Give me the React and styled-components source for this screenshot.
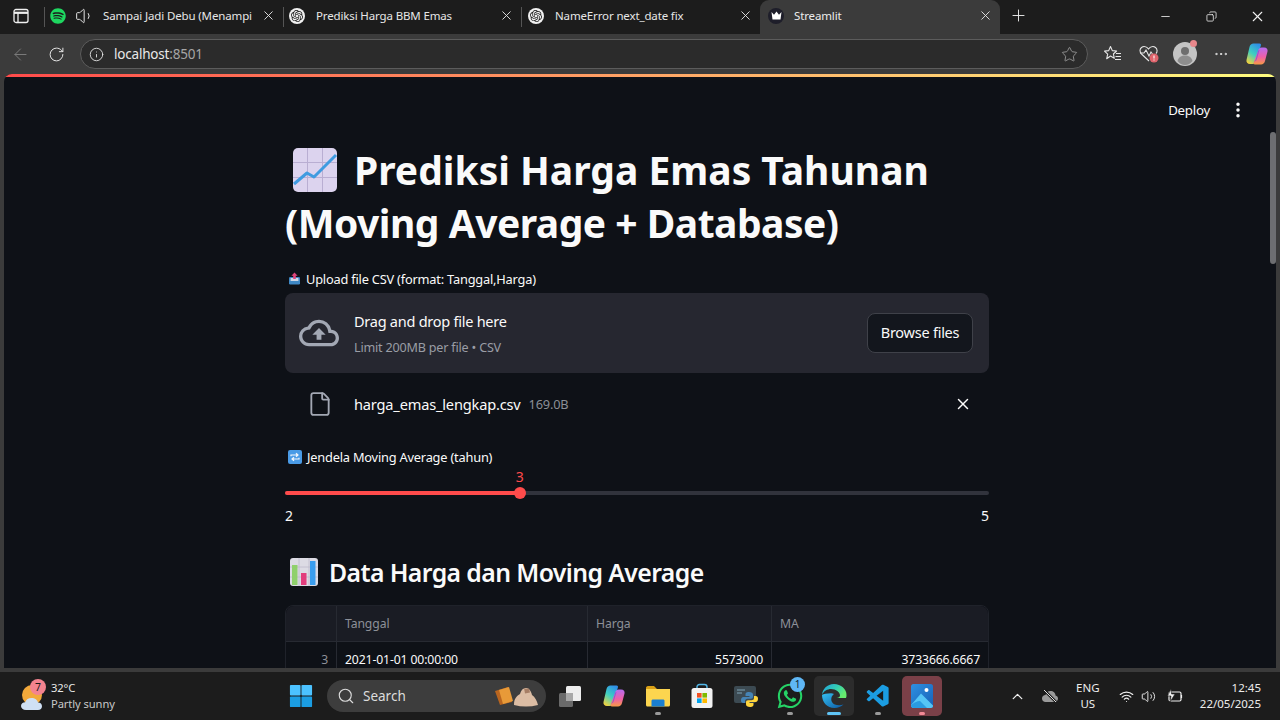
import React from 'react';
import styled, { createGlobalStyle } from 'styled-components';
import { X, Plus, Minus, ArrowLeft, RotateCw, Info, Star, MoreHorizontal, Search, ChevronUp, Wifi, Volume2, Volume1, File, EllipsisVertical, Copy } from 'lucide-react';
import { FaWhatsapp, FaSpotify } from 'react-icons/fa';
import { SiOpenai } from 'react-icons/si';
import { VscVscode } from 'react-icons/vsc';
import { MdOutlineCloudUpload } from 'react-icons/md';

const sans = `"Noto Sans", "Open Sans", sans-serif`;

const Global = createGlobalStyle`
  html, body { margin: 0; padding: 0; width: 1280px; height: 720px; overflow: hidden; background: #1c1c1c; }
  * { box-sizing: border-box; }
`;

const Screen = styled.div`
  width: 1280px; height: 720px; display: flex; flex-direction: column; overflow: hidden;
  font-family: ${sans}; color: #fafafa; background: #1c1c1c;
`;

/* ---------- browser chrome ---------- */
const TabBar = styled.div`
  height: 34px; flex: none; display: flex; align-items: flex-end; background: #1c1c1c; padding-left: 12px;
`;
const SideToggle = styled.div`
  width: 32px; height: 34px; flex: none; display: flex; align-items: center; justify-content: flex-start; padding: 0 0 2px 1px; color: #f0f0f0;
`;
const Tab = styled.div`
  position: relative; height: 34px; width: ${p => p.$w}px; flex: none; display: flex; align-items: center;
  padding: 0 7px 3px ${p => p.$pl || 10}px; font-size: 11.5px; letter-spacing: -0.14px; color: #e6e6e6;
  ${p => p.$sep && `
    &::before { content: ''; position: absolute; left: 0; top: 7px; height: 20px; width: 1px; background: #555; }
  `}
  ${p => p.$active && `background: #3b3b3b; border-radius: 9px 9px 0 0; color: #ececec;`}
`;
const TabTitle = styled.span`
  flex: 1; min-width: 0; white-space: nowrap; overflow: hidden; margin-left: ${p => p.$ml || 10}px;
`;
const TabClose = styled(X)`flex: none; color: #e2e2e2;`;
const NewTab = styled.div`
  height: 34px; width: 36px; flex: none; display: flex; align-items: center; justify-content: center; color: #e8e8e8; padding-bottom: 3px;
`;
const WindowButtons = styled.div`
  margin-left: auto; height: 34px; display: flex; align-items: center; padding-bottom: 1px; color: #f2f2f2;
`;
const WindowButton = styled.div`
  width: 46px; display: flex; align-items: center; justify-content: center;
`;
const Chrome = styled.div`
  height: 40px; flex: none; display: flex; align-items: flex-start; background: #3b3b3b; padding: 5px 10px 0 8px;
`;
const NavIcon = styled.div`
  width: 24px; height: 30px; flex: none; display: flex; align-items: center; justify-content: center;
  margin-left: ${p => p.$ml || 0}px; color: ${p => p.$dim ? '#7d7d7d' : '#e6e6e6'};
`;
const Address = styled.div`
  flex: none; width: 1008px; height: 30px; display: flex; align-items: center; padding: 0 9px 0 8px; margin-left: 12px;
  border: 1px solid #5c5c5c; border-radius: 15px; background: #2b2b2b; font-size: 13.5px; color: #e8e8e8;
`;
const Host = styled.span`margin-left: 10px; flex: 1; letter-spacing: -0.2px;`;
const Port = styled.span`color: #a5a5a5;`;
const ChromeTools = styled.div`
  display: flex; align-items: center; height: 30px; margin-left: 7px; color: #e6e6e6;
`;
const ChromeTool = styled.div`
  position: relative; width: 36px; height: 30px; display: flex; align-items: center; justify-content: center;
`;
const RedDot = styled.span`
  position: absolute; right: ${p => p.$r}px; top: ${p => p.$t}px; width: ${p => p.$s}px; height: ${p => p.$s}px;
  border-radius: 50%; background: ${p => p.$c};
`;

const Frame = styled.div`
  flex: 1; min-height: 0; display: flex; background: #3b3b3b; padding: 0 4px 4px;
`;
const Page = styled.main`
  position: relative; flex: 1; min-width: 0; background: #0e1117; border-radius: 8px 8px 0 0; overflow: hidden;
`;
const Decoration = styled.div`
  height: 2.5px; background: linear-gradient(90deg, #ff4b4b, #fffd80);
`;
const StToolbar = styled.div`
  height: 66px; display: flex; align-items: flex-start; justify-content: flex-end; padding: 23px 28px 0 0;
  font-size: 13.3px; color: #fafafa; letter-spacing: -0.25px;
`;
const Deploy = styled.span`line-height: 20px; margin-right: 18px;`;
const MenuDots = styled(EllipsisVertical)`color: #fafafa;`;
const ScrollThumb = styled.div`
  position: absolute; right: 0; top: 58px; width: 6px; height: 132px; border-radius: 3px; background: #6d6e71;
`;
const Column = styled.div`
  width: 704px; margin-left: 281px;
`;
const H1 = styled.h1`
  margin: 0; font-size: 39px; line-height: 53px; font-weight: 700; color: #fafafa; white-space: nowrap;
`;
const H1Line = styled.span`
  display: block; letter-spacing: ${p => p.$ls}px;
`;
const HeadEmoji = styled.svg`
  width: 46px; height: 46px; vertical-align: -8px; margin-left: 7px; margin-right: 16px;
`;
const WidgetLabel = styled.div`
  display: flex; align-items: center; gap: 5px; height: 20px; font-size: 12.8px; letter-spacing: -0.2px; color: #fafafa; padding-left: 3px;
  margin-top: ${p => p.$mt}px;
`;
const Drop = styled.div`
  margin-top: 4px; height: 80px; display: flex; align-items: center; padding: 0 16px; background: #262730; border-radius: 8px;
`;
const CloudIcon = styled(MdOutlineCloudUpload)`flex: none; color: #a3a8b4; margin-left: -2px;`;
const DropText = styled.div`margin-left: 15px; padding-top: 2px; flex: 1; display: flex; flex-direction: column; gap: 7px;`;
const DropTitle = styled.div`font-size: 14.5px; line-height: 22px; letter-spacing: -0.25px; color: #fafafa;`;
const DropHint = styled.div`font-size: 12.6px; line-height: 18px; letter-spacing: -0.2px; color: #9a9da5;`;
const BrowseBtn = styled.div`
  width: 106px; height: 40px; display: flex; align-items: center; justify-content: center; border-radius: 8px; padding-bottom: 2px;
  border: 1px solid #3f4149; background: #13161d; font-size: 14.5px; letter-spacing: -0.25px; color: #fafafa;
`;
const FileRow = styled.div`
  margin-top: 7px; height: 48px; display: flex; align-items: center; padding-left: 22px; padding-right: 16px;
`;
const FileIcon = styled(File)`flex: none; color: #a3a8b4;`;
const FileName = styled.span`margin-left: 21px; font-size: 14.6px; letter-spacing: -0.18px; color: #fafafa;`;
const FileSize = styled.span`margin-left: 8px; font-size: 12.8px; letter-spacing: -0.2px; color: #8b8e96;`;
const FileClose = styled(X)`margin-left: auto; color: #fafafa; margin-right: 1px;`;
const SliderWrap = styled.div`
  position: relative; margin-top: 24px; height: 4px; border-radius: 2px; background: #31333c;
`;
const SliderFill = styled.div`height: 4px; border-radius: 2px; background: #ff4b4b;`;
const Thumb = styled.div`
  position: absolute; top: -4px; width: 12px; height: 12px; margin-left: -6px; border-radius: 50%; background: #ff4b4b;
`;
const ThumbValue = styled.div`
  position: absolute; top: -23px; width: 20px; margin-left: -10px; text-align: center; font-size: 14px; line-height: 18px; color: #ff4b4b;
`;
const SliderEnds = styled.div`
  margin-top: 12px; display: flex; justify-content: space-between; font-size: 14px; line-height: 18px; color: #fafafa;
`;
const H2 = styled.h2`
  margin: 27px 0 0; display: flex; align-items: center; height: 40px; padding-left: 4px;
  font-size: 24.8px; font-weight: 600; letter-spacing: -0.6px; color: #fafafa; white-space: nowrap;
`;
const H2Emoji = styled.svg`width: 30px; height: 30px; flex: none; margin-right: 10px;`;
const DataTable = styled.div`
  margin-top: 13px; border: 1px solid #1f222a; border-radius: 8px 8px 0 0; display: grid;
  grid-template-columns: 51px 251px 184px 1fr; font-size: 12.2px;
`;
const HeadCell = styled.div`
  height: 36px; display: flex; align-items: center; padding: 0 8px; background: #1a1c24; color: #8d9098;
  border-right: 1px solid #272a32; border-bottom: 1px solid #272a32; letter-spacing: -0.1px;
  &:nth-child(4) { border-right: none; border-top-right-radius: 8px; }
  &:first-child { border-top-left-radius: 8px; }
`;
const BodyCell = styled.div`
  height: 35px; display: flex; align-items: center; padding: 0 8px; color: ${p => p.$muted ? '#8d9098' : '#fafafa'};
  justify-content: ${p => p.$right ? 'flex-end' : 'flex-start'}; letter-spacing: -0.12px;
  border-right: ${p => p.$last ? 'none' : '1px solid #272a32'};
`;

/* ---------- taskbar ---------- */
const Taskbar = styled.footer`
  height: 48px; flex: none; display: flex; align-items: center; background: #1c1c1c;
`;
const Weather = styled.div`
  width: 279px; flex: none; height: 48px; display: flex; align-items: center; padding-left: 20px;
`;
const WeatherIcon = styled.div`position: relative; width: 26px; height: 30px; flex: none;`;
const WeatherBadge = styled.span`
  position: absolute; top: -2px; left: 10px; width: 16px; height: 16px; border-radius: 50%; background: #f4838f; color: #1c1c1c;
  font-size: 10.5px; line-height: 16px; text-align: center;
`;
const WeatherText = styled.div`margin-left: 5px; font-size: 11.2px; line-height: 16px; color: #e8e8e8; letter-spacing: -0.1px;`;
const WeatherSub = styled.div`color: #c8c8c8;`;
const TaskIcon = styled.div`
  position: relative; isolation: isolate; width: 44px; height: 44px; flex: none; display: flex; align-items: center; justify-content: center;
  ${p => p.$bg && `
    &::before { content: ''; position: absolute; z-index: -1; inset: 2px; border-radius: 5px; background: ${p.$bg}; }
  `}
`;
const RunDot = styled.span`
  position: absolute; bottom: 3px; left: 50%; width: ${p => p.$w || 6}px; margin-left: -${p => (p.$w || 6) / 2}px; height: 3px; border-radius: 2px;
  background: ${p => p.$c || '#9a9a9a'};
`;
const CountBadge = styled.span`
  position: absolute; top: 3px; right: 7px; width: 15px; height: 15px; border-radius: 50%; background: #5fb7f5; color: #10222e;
  font-size: 10px; line-height: 15px; text-align: center;
`;
const SearchPill = styled.div`
  width: 219px; height: 32px; flex: none; margin: 0 2px 0 4px; display: flex; align-items: center; border-radius: 16px;
  background: #3d3d3d; padding: 0 2px 0 10px; font-size: 13.5px; color: #dcdcdc;
`;
const SearchWord = styled.span`margin-left: 8px; flex: 1;`;
const Tray = styled.div`
  margin-left: auto; display: flex; align-items: center; height: 48px; color: #f0f0f0;
`;
const TrayIcon = styled.div`
  width: ${p => p.$w || 32}px; display: flex; align-items: center; justify-content: center;
`;
const Lang = styled.div`width: 44px; text-align: center; font-size: 11.5px; line-height: 16px; color: #ececec; margin-right: 6px;`;
const Clock = styled.div`margin: 0 19px 0 12px; text-align: right; font-size: 11.5px; line-height: 16px; color: #ececec; white-space: nowrap;`;
const ChatCircle = styled.span`
  width: 16px; height: 16px; flex: none; border-radius: 50%; background: #f0f0f0; display: flex; align-items: center; justify-content: center;
`;
const CrownCircle = styled.span`
  width: 16px; height: 16px; flex: none; border-radius: 50%; background: #1e1e2a; display: flex; align-items: center; justify-content: center;
`;

const ChatIcon = () => (
  <ChatCircle><SiOpenai size={12} color="#1c1c1c" /></ChatCircle>
);

const ChartEmoji = () => (
  <HeadEmoji viewBox="0 0 46 46">
    <rect x="1" y="1" width="44" height="44" rx="5" fill="#dcd3ee" />
    <path d="M15.5 1v44M30.5 1v44M1 15.5h44M1 30.5h44" stroke="#b9aed2" strokeWidth="1" />
    <path d="M2 37 L15 26 L22 30 L44 8" fill="none" stroke="#3f9be0" strokeWidth="3" strokeLinejoin="round" />
  </HeadEmoji>
);
const TrayEmoji = () => (
  <svg width="13" height="13" viewBox="0 0 13 13" style={{ flex: 'none' }}>
    <rect x="1" y="5" width="11" height="7.5" rx="1.2" fill="#3f88c5" />
    <rect x="2.6" y="6" width="7.8" height="3" fill="#cfd8e6" />
    <path d="M6.5 0.5 L9.6 3.8 H7.8 V7 H5.2 V3.8 H3.4Z" fill="#e0457b" />
  </svg>
);
const RepeatEmoji = () => (
  <svg width="14" height="14" viewBox="0 0 14 14" style={{ flex: 'none' }}>
    <rect width="14" height="14" rx="2" fill="#4a9be6" />
    <path d="M3 6.2V5h6.5M8 3.2 10 5 8 6.8M11 7.8V9H4.5M6 7.2 4 9l2 1.8" fill="none" stroke="#f2f6fb" strokeWidth="1.2" />
  </svg>
);
const BarsEmoji = () => (
  <H2Emoji viewBox="0 0 30 30">
    <rect x="1" y="1" width="28" height="28" rx="3" fill="#dcdbe4" />
    <path d="M10 1v28M20 1v28M1 10h28M1 20h28" stroke="#bcbaca" strokeWidth="0.8" />
    <rect x="3" y="8" width="5.5" height="20" fill="#8fd06c" />
    <rect x="12" y="16" width="5.5" height="12" fill="#e23d7c" />
    <rect x="21" y="4" width="5.5" height="24" fill="#3a9eef" />
  </H2Emoji>
);

const CopilotIcon = ({ id, size = 24 }) => (
  <svg width={size} height={size} viewBox="0 0 24 24" style={{ flex: 'none' }}>
    <defs>
      <linearGradient id={`${id}A`} x1="0.7" y1="0" x2="0.2" y2="1">
        <stop offset="0" stopColor="#2f8fe8" /><stop offset="0.5" stopColor="#3fd0c0" /><stop offset="1" stopColor="#f4d23c" />
      </linearGradient>
      <linearGradient id={`${id}B`} x1="0.5" y1="0" x2="0.5" y2="1">
        <stop offset="0" stopColor="#b56cf0" /><stop offset="0.55" stopColor="#ef5fa8" /><stop offset="1" stopColor="#f79a45" />
      </linearGradient>
    </defs>
    <path d="M8.500 1.500h6c1.500 0 1.800 1 1.300 2.300L11.500 19c-.5 1.800-1.800 3-3.800 3H5C2.500 22 1 20.300 1.500 18L4.500 5c.5-2.200 2-3.500 4-3.500Z" fill={`url(#${id}A)`} />
    <path d="M13 9c.5-2 1.800-3.500 3.800-3.500h2.200c2.800 0 4 1.800 3.500 4L20 19c-.5 2.200-2 3.500-4 3.500H10c-1.500 0-1.800-1-1.300-2.300Z" fill={`url(#${id}B)`} />
    <path d="M13.200 8.500 10.800 17c-.4 1.300-1 2-2 2.400 1.500.1 2.500-.8 3-2.200L14.500 8Z" fill="#7c4ed8" opacity="0.7" />
  </svg>
);

const FavoritesIcon = () => (
  <svg width="20" height="20" viewBox="0 0 20 20" fill="none" stroke="#e6e6e6" strokeWidth="1.1" strokeLinejoin="round">
    <path d="M7.500 2.500 9.300 6.600 13.600 7 10.400 10 11.300 14.300 7.500 12 3.700 14.700 4.700 10.200 1.500 7.100 5.700 6.600Z" />
    <path d="M13 9.500h5M12.500 12.500h5.500M12 15.500h6" />
  </svg>
);
const HealthIcon = () => (
  <svg width="24" height="22" viewBox="0 0 24 22" fill="none" stroke="#e6e6e6" strokeWidth="1.1">
    <path d="M12 18 4.500 11C2.500 9 2.500 6 4.500 4.500c2-1.500 5-1 7 1.500 2-2.500 5-3 7-1.500 2 1.500 2 4.500.5 6" />
    <path d="M3 10h4l2-3 3 6 2-4 1.500 2" />
    <circle cx="17" cy="15" r="4.500" fill="#e0656d" stroke="none" />
    <path d="M17 12.500v3M17 16.600v.9" stroke="#fff" strokeWidth="1.100" />
  </svg>
);
const PanelIcon = () => (
  <svg width="16" height="16" viewBox="0 0 16 16">
    <rect x="1" y="1.500" width="14" height="13" rx="2" fill="none" stroke="#f0f0f0" strokeWidth="1.300" />
    <path d="M1 4.800h14" stroke="#f0f0f0" strokeWidth="2.200" />
    <path d="M5 4.800v9.700" stroke="#f0f0f0" strokeWidth="1.300" />
  </svg>
);

const tasks = {
  taskview: (
    <svg width="24" height="24" viewBox="0 0 24 24">
      <rect x="1" y="9" width="14" height="14" rx="1.500" fill="#6a6a6a" />
      <rect x="8" y="2" width="15" height="15" rx="1.500" fill="#ededed" />
      <rect x="8" y="9" width="7" height="8" fill="#a8a8a8" />
    </svg>
  ),
  explorer: (
    <svg width="26" height="26" viewBox="0 0 26 26">
      <path d="M1 5c0-1 .7-2 2-2h6l3 3h12c.6 0 1 .5 1 1v3H1Z" fill="#d9a016" />
      <path d="M1 6h24v16c0 .8-.6 1.500-1.500 1.500h-21C1.600 23.500 1 22.800 1 22Z" fill="#fcd54f" />
      <path d="M8 16.500h10c1 0 1.500.5 1.500 1.500v5.500h-13V18c0-1 .5-1.500 1.500-1.500Z" fill="#1a7fd0" />
    </svg>
  ),
  store: (
    <svg width="24" height="26" viewBox="0 0 24 26">
      <path d="M7 7V4c0-1.500 1-2.500 2.500-2.500h5C16 1.500 17 2.500 17 4v3" fill="none" stroke="#52b7e8" strokeWidth="1.400" />
      <rect x="1.500" y="5" width="21" height="20" rx="2.500" fill="#f2f2f2" />
      <rect x="7" y="10" width="4.600" height="4.600" fill="#f25022" />
      <rect x="12.400" y="10" width="4.600" height="4.600" fill="#7fba00" />
      <rect x="7" y="15.400" width="4.600" height="4.600" fill="#00a4ef" />
      <rect x="12.400" y="15.400" width="4.600" height="4.600" fill="#ffb900" />
    </svg>
  ),
  python: (
    <svg width="26" height="26" viewBox="0 0 26 26">
      <rect x="1" y="3" width="22" height="17" rx="2" fill="#3c4a52" />
      <path d="M4 7h8M4 10h5" stroke="#7fa3b5" strokeWidth="1" />
      <path d="M16 9c-3 0-3.500 1.300-3.500 2.500V13h4v1h-6c-1.800 0-2.500 1.400-2.500 3.200S8.700 20 10.500 20H12v-2c0-1.300 1-2.300 2.500-2.300h3.500c1.200 0 2-.9 2-2v-2C20 10 18.500 9 16 9Z" fill="#4584b6" />
      <path d="M17 24c3 0 3.500-1.300 3.500-2.500V20h-4v-1h6c1.800 0 2.500-1.400 2.500-3.200s-.7-2.800-2.500-2.800H21v2c0 1.300-1 2.300-2.500 2.300H15c-1.200 0-2 .9-2 2v2c0 1.700 1.500 2.700 4 2.700Z" fill="#ffd43b" />
    </svg>
  ),
  edge: (
    <svg width="26" height="26" viewBox="0 0 26 26">
      <defs>
        <linearGradient id="edgeA" x1="0" y1="0" x2="1" y2="1"><stop offset="0" stopColor="#35c1f1" /><stop offset="1" stopColor="#0c59a4" /></linearGradient>
        <linearGradient id="edgeB" x1="0" y1="0" x2="1" y2="0.500"><stop offset="0" stopColor="#1f9fe0" /><stop offset="0.6" stopColor="#35d0b0" /><stop offset="1" stopColor="#66eb6e" /></linearGradient>
      </defs>
      <path d="M13 1C6 1 1.500 6 1 12c1.500-4 5.500-6 9-6 5 0 9 3 9 6.500 0 1.500-1.500 2.500-3.500 2.500H25c.5-1 .5-2 .5-3C25.500 6 20 1 13 1Z" fill="url(#edgeB)" />
      <path d="M1 12c0 7 5 13 12.500 13 3.500 0 6.500-1.200 9-3.500-4.500 1.800-10 .5-11.500-2.500-1.500-3-.5-6 2-8-1-.5-2-.8-3-.8C6 10.200 2.500 11 1 12Z" fill="url(#edgeA)" />
    </svg>
  ),
  photos: (
    <svg width="24" height="26" viewBox="0 0 24 26">
      <defs>
        <linearGradient id="phA" x1="0" y1="0" x2="1" y2="1"><stop offset="0" stopColor="#2f8fe0" /><stop offset="1" stopColor="#1662b8" /></linearGradient>
      </defs>
      <rect x="1" y="1" width="22" height="24" rx="2.500" fill="url(#phA)" />
      <circle cx="16.500" cy="7" r="2" fill="#ffffff" />
      <path d="M1 22 11 10.500 23 22.500V23c0 1.100-.9 2-2 2H4c-1.700 0-3-1.300-3-3Z" fill="#55c5f5" />
      <path d="M1 22c3-2 6-4 9-4l7 7H4c-1.700 0-3-1.300-3-3Z" fill="#2a9be0" />
    </svg>
  ),
};

export default function App() {
  return (
    <Screen>
      <Global />
      <TabBar>
        <SideToggle><PanelIcon /></SideToggle>
        <Tab $w={239} $sep $pl={6}>
          <FaSpotify size={16} color="#1ed760" style={{ flex: 'none' }} />
          <Volume1 size={20} strokeWidth={1.200} style={{ flex: 'none', marginLeft: 9 }} />
          <TabTitle $ml={8}>Sampai Jadi Debu (Menampi</TabTitle>
          <TabClose size={15} strokeWidth={1.500} />
        </Tab>
        <Tab $w={238} $sep $pl={6}>
          <ChatIcon />
          <TabTitle $ml={11}>Prediksi Harga BBM Emas</TabTitle>
          <TabClose size={15} strokeWidth={1.500} />
        </Tab>
        <Tab $w={239} $sep $pl={7}>
          <ChatIcon />
          <TabTitle $ml={11}>NameError next_date fix</TabTitle>
          <TabClose size={15} strokeWidth={1.500} />
        </Tab>
        <Tab $w={240} $active $pl={8}>
          <CrownCircle>
            <svg width="11" height="9" viewBox="0 0 11 9"><path d="M0.500 1 3 3.800 5.500 0.500 8 3.800 10.500 1 9.500 8.500H1.500Z" fill="#fff" /></svg>
          </CrownCircle>
          <TabTitle $ml={10}>Streamlit</TabTitle>
          <TabClose size={15} strokeWidth={1.500} />
        </Tab>
        <NewTab><Plus size={19} strokeWidth={1.200} /></NewTab>
        <WindowButtons>
          <WindowButton><Minus size={13} strokeWidth={1.500} /></WindowButton>
          <WindowButton><Copy size={11} strokeWidth={1.700} style={{ transform: 'scaleX(-1)' }} /></WindowButton>
          <WindowButton><X size={17} strokeWidth={1.500} /></WindowButton>
        </WindowButtons>
      </TabBar>
      <Chrome>
        <NavIcon $dim><ArrowLeft size={19} strokeWidth={1.200} /></NavIcon>
        <NavIcon $ml={12}><RotateCw size={17} strokeWidth={1.400} /></NavIcon>
        <Address>
          <Info size={15} strokeWidth={1.400} />
          <Host>localhost<Port>:8501</Port></Host>
          <Star size={17} strokeWidth={1.100} color="#a8a8a8" />
        </Address>
        <ChromeTools>
          <ChromeTool><FavoritesIcon /></ChromeTool>
          <ChromeTool><HealthIcon /></ChromeTool>
          <ChromeTool>
            <svg width="24" height="24" viewBox="0 0 24 24">
              <circle cx="12" cy="12" r="12" fill="#c4c4c4" />
              <circle cx="12" cy="9" r="4" fill="#6e6e6e" />
              <path d="M4.500 19c1-4 4-5.500 7.500-5.500s6.500 1.500 7.500 5.500c-2 2.500-4.500 4-7.500 4s-5.500-1.500-7.500-4Z" fill="#8e8e8e" />
            </svg>
            <RedDot $r={6} $t={1} $s={7} $c="#e8878b" />
          </ChromeTool>
          <ChromeTool><MoreHorizontal size={16} strokeWidth={1.500} /></ChromeTool>
          <ChromeTool><CopilotIcon id="cpTop" /></ChromeTool>
        </ChromeTools>
      </Chrome>
      <Frame>
        <Page>
          <Decoration />
          <ScrollThumb />
          <StToolbar>
            <Deploy>Deploy</Deploy>
            <MenuDots size={20} strokeWidth={2.200} />
          </StToolbar>
          <Column>
            <H1>
              <H1Line $ls={0}><ChartEmoji />Prediksi Harga Emas Tahunan</H1Line>
              <H1Line $ls={-0.5}>(Moving Average + Database)</H1Line>
            </H1>
            <WidgetLabel $mt={20}><TrayEmoji />Upload file CSV (format: Tanggal,Harga)</WidgetLabel>
            <Drop>
              <CloudIcon size={40} />
              <DropText>
                <DropTitle>Drag and drop file here</DropTitle>
                <DropHint>Limit 200MB per file • CSV</DropHint>
              </DropText>
              <BrowseBtn>Browse files</BrowseBtn>
            </Drop>
            <FileRow>
              <FileIcon size={26} strokeWidth={1.700} />
              <FileName>harga_emas_lengkap.csv</FileName>
              <FileSize>169.0B</FileSize>
              <FileClose size={18} strokeWidth={2} />
            </FileRow>
            <WidgetLabel $mt={19}><RepeatEmoji />Jendela Moving Average (tahun)</WidgetLabel>
            <SliderWrap>
              <SliderFill style={{ width: '33.33%' }} />
              <Thumb style={{ left: '33.33%' }} />
              <ThumbValue style={{ left: '33.33%' }}>3</ThumbValue>
            </SliderWrap>
            <SliderEnds><span>2</span><span>5</span></SliderEnds>
            <H2><BarsEmoji />Data Harga dan Moving Average</H2>
            <DataTable>
              <HeadCell />
              <HeadCell>Tanggal</HeadCell>
              <HeadCell>Harga</HeadCell>
              <HeadCell>MA</HeadCell>
              <BodyCell $muted $right>3</BodyCell>
              <BodyCell>2021-01-01 00:00:00</BodyCell>
              <BodyCell $right>5573000</BodyCell>
              <BodyCell $right $last>3733666.6667</BodyCell>
            </DataTable>
          </Column>
        </Page>
      </Frame>
      <Taskbar>
        <Weather>
          <WeatherIcon>
            <svg width="26" height="30" viewBox="0 0 26 30" style={{ position: 'absolute', left: 0, top: 2 }}>
              <circle cx="12" cy="12" r="10" fill="#f2a93b" />
              <path d="M6 27c-3 0-5-1.800-5-4s1.800-3.800 4.200-3.800C6 16.500 8.500 15 11.500 15c3.500 0 6 2 6.500 4.500 2.500 0 4 1.500 4 3.700S20.500 27 18 27Z" fill="#cfe0f4" />
            </svg>
            <WeatherBadge>7</WeatherBadge>
          </WeatherIcon>
          <WeatherText>32°C<WeatherSub>Partly sunny</WeatherSub></WeatherText>
        </Weather>
        <TaskIcon>
          <svg width="24" height="24" viewBox="0 0 26 26">
            <rect x="1" y="1" width="11.500" height="11.500" rx="1" fill="#4cc2ff" />
            <rect x="13.500" y="1" width="11.500" height="11.500" rx="1" fill="#4cc2ff" />
            <rect x="1" y="13.500" width="11.500" height="11.500" rx="1" fill="#1b9de2" />
            <rect x="13.500" y="13.500" width="11.500" height="11.500" rx="1" fill="#1b9de2" />
          </svg>
        </TaskIcon>
        <SearchPill>
          <Search size={18} strokeWidth={1.500} />
          <SearchWord>Search</SearchWord>
          <svg width="50" height="26" viewBox="0 0 50 26" style={{ flex: 'none' }}>
            <path d="M1 8 14 4 18 19 6 22Z" fill="#b9651f" />
            <path d="M5 7 15 4 19 18 9 21Z" fill="#e89a38" />
            <path d="M20 22c0-7 3-9 6-11 1-4 3-6 6-6s5 3 6 7c3 2 5 6 6 10-8 2-16 2-24 0Z" fill="#dcbda4" />
            <path d="M30 5c1 1 3 1 5 .5l1 4-5 1Z" fill="#a77f66" />
          </svg>
        </SearchPill>
        <TaskIcon>{tasks.taskview}</TaskIcon>
        <TaskIcon><CopilotIcon id="cpBar" /></TaskIcon>
        <TaskIcon>{tasks.explorer}<RunDot /></TaskIcon>
        <TaskIcon>{tasks.store}</TaskIcon>
        <TaskIcon>{tasks.python}</TaskIcon>
        <TaskIcon><FaWhatsapp size={28} color="#25d366" /><CountBadge>1</CountBadge><RunDot /></TaskIcon>
        <TaskIcon $bg="#2c2c2c">{tasks.edge}<RunDot $w={14} $c="#5fc4f5" /></TaskIcon>
        <TaskIcon><VscVscode size={27} color="#1b9de2" /><RunDot /></TaskIcon>
        <TaskIcon $bg="#7a4048">{tasks.photos}<RunDot $c="#f28a96" /></TaskIcon>
        <Tray>
          <TrayIcon $w={32}><ChevronUp size={17} strokeWidth={1.800} /></TrayIcon>
          <TrayIcon $w={32}>
            <svg width="18" height="14" viewBox="0 0 18 14">
              <path d="M4.500 13C2.500 13 1 11.500 1 9.500S2.500 6 4.500 6C5 3.500 7 2 9.500 2c2.800 0 5 2 5 4.500 1.500.3 2.500 1.600 2.500 3.100C17 11.500 15.500 13 13.500 13Z" fill="#9a9a9a" />
              <path d="M3 1l12 12" stroke="#1c1c1c" strokeWidth="2.500" />
              <path d="M3 1l12 12" stroke="#e0e0e0" strokeWidth="1" />
            </svg>
          </TrayIcon>
          <Lang>ENG<br />US</Lang>
          <TrayIcon $w={22}><Wifi size={15} strokeWidth={1.800} /></TrayIcon>
          <TrayIcon $w={22}><Volume2 size={15} strokeWidth={1.500} /></TrayIcon>
          <TrayIcon $w={28}>
            <svg width="18" height="16" viewBox="0 0 18 16">
              <rect x="4" y="4" width="12" height="9" rx="1.500" fill="none" stroke="#f0f0f0" strokeWidth="1.200" />
              <path d="M16.500 7v3" stroke="#f0f0f0" strokeWidth="1.200" />
              <path d="M6 1 2.500 8H6l-1 6 5-8H6.500Z" fill="#f0f0f0" stroke="#1c1c1c" strokeWidth="0.600" />
            </svg>
          </TrayIcon>
          <Clock>12:45<br />22/05/2025</Clock>
        </Tray>
      </Taskbar>
    </Screen>
  );
}
